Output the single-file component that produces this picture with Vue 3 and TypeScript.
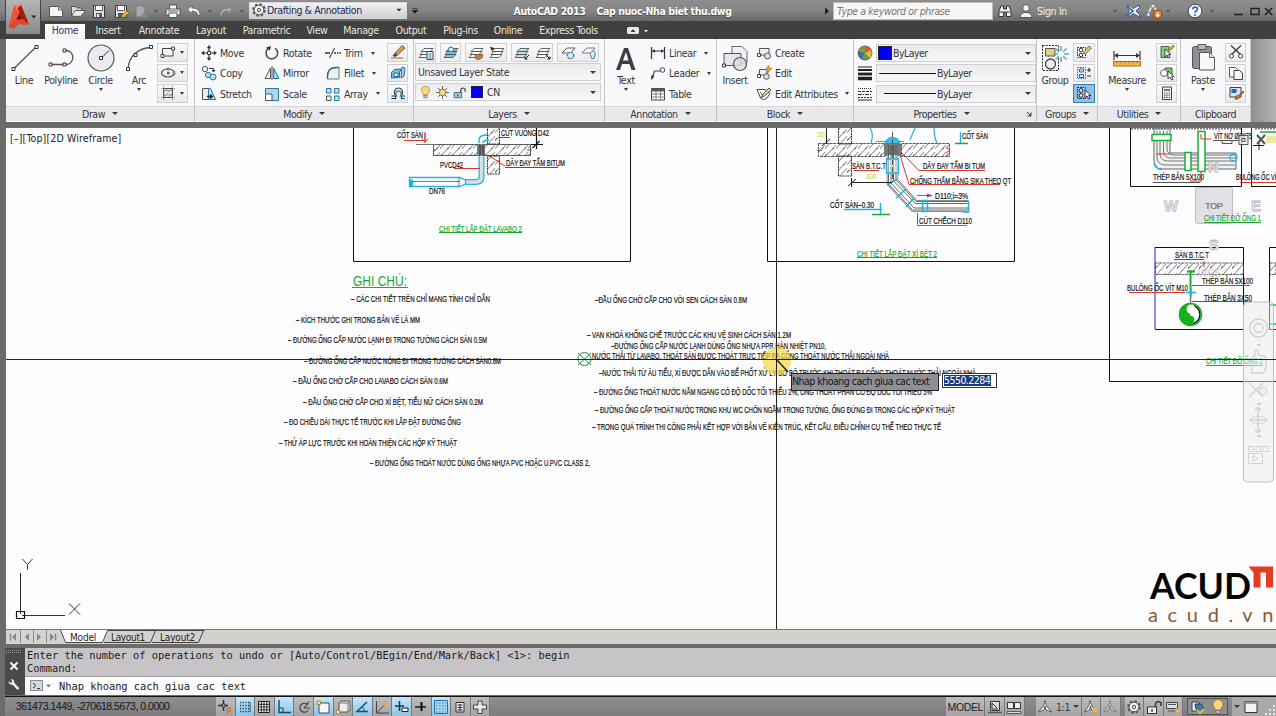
<script setup lang="ts">
type Slot = { icon: string; w: number }
type Note = [number, number, number, string]
type Cell = { icon: string; label: string; arrow?: boolean }

const K = 'fill="none" stroke="#4a4d55" stroke-width="1.2"'
const icons: Record<string, string> = {
  arrow: '<path d="M5 6.5h6L8 9.800z" fill="#333"/>',
  dimArrow: '<path d="M5.500 7h5L8 9.600z" fill="#555"/>',
  blackArrow: '<path d="M5 5h6M5 7.500h6L8 10.500z" fill="#111" stroke="#111" stroke-width=".8"/>',
  rightArrow: '<path d="M6 4v8l4-4z" fill="#111"/>',
  new: '<path d="M1.500 3.500h9l4 3.500v6.500h-13z" fill="#f4f4f4" stroke="#555"/><path d="M10.500 3.500V7h4" fill="#ccc" stroke="#666"/>',
  open: '<path d="M1.500 13V3.500h4l1 1.500h5v2.500" fill="#ddd" stroke="#555"/><path d="M1.500 13.300L5 7.500h10.500L11 13.300z" fill="#eee" stroke="#555"/>',
  save: '<path d="M2.500 2.500h11v12h-11z" fill="#dfe0e4" stroke="#33363c"/><path d="M4.500 2.500h7v5h-7z" fill="#fff" stroke="#555"/><path d="M5 10h6v4.500H5z" fill="#555b66"/><path d="M6 11h2v3H6z" fill="#eee"/>',
  saveas: '<path d="M2.500 2.500h11v12h-11z" fill="#dfe0e4" stroke="#33363c"/><path d="M4.500 2.500h7v5h-7z" fill="#fff" stroke="#555"/><path d="M5 10h5v4.500H5z" fill="#555b66"/><path d="M8 15l1-3 5-4 2 2-5 4z" fill="#f0b63a" stroke="#7a5413" stroke-width=".7"/>',
  plot: '<path d="M3 2.500h6l3 3V14H3z" fill="#aaa" stroke="#777"/><path d="M7 15l5-6 3 3v3z" fill="#8b8b8b" stroke="#777"/>',
  print: '<path d="M4.500 6V2h7v4" fill="#fff" stroke="#555"/><path d="M1 6h14v6H1z" fill="#f2f2f2" stroke="#555"/><path d="M4 10h8v4.500H4z" fill="#fff" stroke="#555"/><path d="M2.500 8h11" stroke="#666"/>',
  undo: '<path d="M1.500 6.500L6 2.500v2.600c5 0 8 2 8 7.400h-2.300c0-3.400-2-4.300-5.700-4.300v2.500z" fill="#f2f2f2" stroke="#555" stroke-width=".8"/>',
  redo: '<path d="M14.500 6.500L10 2.500v2.600c-5 0-8 2-8 7.400h2.300c0-3.400 2-4.300 5.700-4.300v2.500z" fill="#aaa" stroke="#777" stroke-width=".8"/>',
  gear: '<circle cx="8" cy="8" r="5.800" fill="none" stroke="#555" stroke-width="2" stroke-dasharray="2.600 1.900"/><circle cx="8" cy="8" r="4.800" fill="#f4f4f4" stroke="#555"/><circle cx="8" cy="8" r="1.700" fill="#ddd" stroke="#555"/>',
  binoc: '<path d="M2 13.500V8l2-5h2.500v3h3V3H12l2 5v5.500H9.500V9h-3v4.500z" fill="#f1f1f1" stroke="#333"/><path d="M3 9h3M10 9h3" stroke="#333"/>',
  person: '<circle cx="8" cy="5" r="3.400" fill="#f3f3f3" stroke="#555"/><path d="M2 14.500c0-3 2-4 4-5h4c2 1 4 2 4 5z" fill="#f3f3f3" stroke="#555"/>',
  exch: '<path d="M1.500 3h4L8 5.500 14.500 2v2.500L11 8l3.500 3.500v2.500L8 10.500 5.500 13h-4l3-5z" fill="#e7edf7" stroke="#33598e"/><path d="M2.500 3.500L8 8l-5.500 4.500" fill="none" stroke="#2b5aa0" stroke-width="1.600"/>',
  a360: '<path d="M1 13L6 3h2l2 5" fill="none" stroke="#eee" stroke-width="1.600"/><circle cx="7" cy="3" r="2" fill="#eee" stroke="#555" stroke-width=".6"/><circle cx="2.500" cy="11.500" r="2" fill="#cfe0ee" stroke="#446" stroke-width=".6"/><path d="M8 7.500h7.500V15H8z" fill="#e87f22" stroke="#8d4307" stroke-width=".7"/><path d="M11.700 9v3.500M10 11.500l1.700 2 1.700-2" stroke="#fff" fill="none" stroke-width="1.200"/>',
  help: '<circle cx="8" cy="8" r="6.800" fill="#f6f8fb" stroke="#444"/><path d="M5.800 6.300c0-3 4.600-2.800 4.600-.2 0 1.700-2.300 1.700-2.300 3.600M8 11v1.800" fill="none" stroke="#2267b0" stroke-width="1.700"/>',
  min: '<path d="M3 11.500h9" stroke="#222" stroke-width="1.600"/>',
  max: '<path d="M4 5.500h8v6H4z" fill="none" stroke="#222" stroke-width="1.400"/>',
  close: '<path d="M4 5l7 7M11 5l-7 7" stroke="#222" stroke-width="1.600"/>',
  rect: '<path d="M2.500 4.500h10.500v7.500H2.500z" fill="#f3f4f7" stroke="#444"/><path d="M1 10.500h3v3H1zM11.500 3h3v3h-3z" fill="#fff" stroke="#444"/>',
  ellipse: `<ellipse cx="8" cy="8" rx="6.500" ry="4" ${K}/><path d="M7 8h3M8 6.500v3" stroke="#333"/><path d="M13 7h2v2h-2zM7.500 3h1.500v2H7.500z" fill="#fff" stroke="#444" stroke-width=".7"/>`,
  hatch: '<path d="M3.500 3.500h9v9h-9z" fill="#eee" stroke="#444"/><path d="M3.500 8l4.500-4.500M3.500 12l8.500-8.500M8 12.500l4.500-4.500M3.500 5.500h9M3.500 10h9" stroke="#777" stroke-width=".7"/><path d="M1 3.500h14M1 12.500h14M3.500 1v14M12.500 1v14" stroke="#555" stroke-width=".7" stroke-dasharray="1.500 1"/>',
  move: '<path d="M8 2v12M2 8h12" stroke="#333" stroke-width="1.200"/><path d="M8 0L5.800 3.200h4.400zM8 16l-2.200-3.200h4.400zM0 8l3.200-2.200v4.400zM16 8l-3.200-2.200v4.400z" fill="#333"/><path d="M6.500 6.500h3v3h-3z" fill="#fff" stroke="#333"/>',
  copy: '<circle cx="4" cy="4" r="2.700" fill="#fff" stroke="#555"/><path d="M8 3.500h4.500v3M11 5l1.500 2L14 5" fill="none" stroke="#333"/><circle cx="7" cy="10" r="2.700" fill="#bfe0f2" stroke="#2479a8"/><circle cx="12" cy="12" r="3" fill="#bfe0f2" stroke="#2479a8"/>',
  stretch: '<path d="M1.500 2.500h6v11h-6z" fill="#eee" stroke="#555"/><path d="M7.500 2.500h2l5 11h-7z" fill="#bfe2f2" stroke="#2479a8"/><path d="M6 10.500h5M9 8.500l2.500 2-2.500 2" fill="none" stroke="#222" stroke-width="1.300"/>',
  rotate: '<path d="M11 3.200A5.800 5.800 0 1 1 5 3" fill="none" stroke="#50545c" stroke-width="1.600"/><path d="M2 2.500l5-1.500-1 4.500z" fill="#333"/>',
  mirror: '<path d="M1 13.500L6.500 3v10.500z" fill="#f1f1f1" stroke="#555"/><path d="M9.500 3L15 13.500H9.500z" fill="#9fd3ec" stroke="#2479a8"/><path d="M8 1v14" stroke="#333" stroke-width=".8"/>',
  scale: '<path d="M1.500 2.500h13v12h-13z" fill="#aad8ee" stroke="#2479a8"/><path d="M1.500 8h6.500v6.500H1.500z" fill="#fff" stroke="#555"/>',
  trim: '<path d="M0 8h5M9 8h2M12 8h1.500M14.500 8h1.500" stroke="#333" stroke-width="1.300"/><path d="M4.500 13L9.500 3" stroke="#555" stroke-width="1.200"/>',
  fillet: '<path d="M2.500 14V11C2.500 5 6 2.500 11 2.500h3V14z" fill="#edf1f5" stroke="#777"/><path d="M2.500 14v-3C2.500 5 6 2.500 11 2.500h3" fill="none" stroke="#315f86" stroke-width="1.300"/>',
  array: '<path d="M1.500 2.500H6V7H1.500zM9.500 2.500H14V7H9.500zM9.500 10H14v4.500H9.500z" fill="#bfe2f2" stroke="#2479a8"/><path d="M1.500 10H6v4.500H1.500z" fill="#eee" stroke="#555"/>',
  erase: '<path d="M5 9L12 1.500l3 2.500-7.500 7z" fill="#d59c4e" stroke="#6d4b1b" stroke-width=".8"/><path d="M2.500 12L5 9l2.500 2-2 2z" fill="#444"/><path d="M1 14h12" stroke="#c4552d"/>',
  explode: '<path d="M1.500 7.500l3-3 7-.5-2 3v5.500l-8 .5z" fill="#79c2e2" stroke="#1d6f9f"/><path d="M12 2l3 1-1 8-3 2z" fill="#a4d8ee" stroke="#1d6f9f"/><path d="M4 8h4v3.500H4z" fill="#d8f0fa" stroke="#1d6f9f"/>',
  offset: '<path d="M1.500 13.500h4v-3C3 7 5 3 8.500 3s5.500 4 3 7.500v3h3" fill="none" stroke="#333" stroke-width="1.200"/><path d="M1.500 11h5C5 8 6.500 6 8.500 6s3.500 2 2 5H15" fill="none" stroke="#2b83b4" stroke-width="1.400"/>',
  layer: '<path d="M1 12.500l3-3h9l-3 3zM2 9.500l3-3h9l-3 3zM3 6.500l3-3h9l-3 3z" fill="#fff" stroke="#555" stroke-width=".9"/>',
  text: '<path d="M9 2h4l7.500 22h-4l-2-6H7l-2 6H1zM8 14.500h5.500L11 6z" fill="#3d3f45"/>',
  linear: '<path d="M1.500 2v12M14.500 2v12M2 6h12" stroke="#333" stroke-width="1.200"/><path d="M2 6l3-1.800v3.600zM14 6l-3-1.800v3.600z" fill="#333"/>',
  leader: '<path d="M2 14l2.500-8h6" fill="none" stroke="#444" stroke-width="1.200"/><path d="M1 15l.5-5 3 1z" fill="#333"/><circle cx="12.500" cy="5" r="2.300" fill="#fff" stroke="#444"/>',
  table: '<path d="M1.500 2.500h13v11.500h-13z" fill="#fff" stroke="#444"/><path d="M1.500 2.500h13V5.500h-13z" fill="#555c68"/><path d="M1.500 8h13M1.500 11h13M6 5v9M10.500 5v9" stroke="#777" stroke-width=".9"/>',
  create: '<path d="M3.500 3.500H13v6.500H3.500z" fill="#eef0f4" stroke="#555"/><path d="M1.500 8.500h3v3h-3z" fill="#fff" stroke="#444"/><circle cx="11.500" cy="11" r="3" fill="#dde1e8" stroke="#555"/>',
  edit: '<path d="M3.500 4.500H11V10H3.500z" fill="#eef0f4" stroke="#555"/><path d="M1.500 9.500h3v3h-3z" fill="#fff" stroke="#444"/><circle cx="10.500" cy="11.500" r="2.800" fill="#dde1e8" stroke="#555"/><path d="M12.500 0L9.500 5h3l-1.500 4 5-6h-3z" fill="#f2a72c" stroke="#a1600c" stroke-width=".5"/>',
  attr: '<path d="M1 3.500h8l5 4-3 4.500c-3 2-5 2-6.500 0z" fill="#fff" stroke="#444"/><path d="M4 5.500l2.500 4M5 12l2-4 6-6 2 2-6 5.500z" fill="#ead09a" stroke="#333" stroke-width=".8"/>',
  wheel: '<circle cx="8" cy="8" r="7" fill="#e8a03c"/><path d="M8 8V1A7 7 0 0 0 1.500 6z" fill="#8d9a3f"/><path d="M8 8L1.500 6A7 7 0 0 0 5 14.500z" fill="#3970b5"/><path d="M8 8l-3 6.500a7 7 0 0 0 8-1.500z" fill="#4fa35c"/><path d="M8 8l5 5A7 7 0 0 0 14.500 5z" fill="#e2c23a"/><path d="M8 8l6.500-3A7 7 0 0 0 8 1z" fill="#d9602e"/><circle cx="8" cy="8" r="7" fill="none" stroke="#555" stroke-width=".7"/>',
  weight: '<path d="M1 2h14" stroke="#222"/><path d="M1 5h14" stroke="#222" stroke-width="2"/><path d="M1 9h14" stroke="#222" stroke-width="2.800"/><path d="M1 13.500h14" stroke="#222" stroke-width="3.500"/>',
  ltype: '<path d="M1 2.500h14" stroke="#333" stroke-dasharray="1 1"/><path d="M1 5.500h14" stroke="#333" stroke-dasharray="3 1"/><path d="M1 8.500h14" stroke="#333" stroke-dasharray="4 1 1 1"/><path d="M1 11.500h14" stroke="#333" stroke-dasharray="2 1"/><path d="M1 14h14" stroke="#333"/>',
  ungroup: '<path d="M1.500 3.500h8v10h-8z" fill="none" stroke="#222" stroke-dasharray="1.500 1"/><circle cx="5" cy="6" r="1.800" fill="#fff" stroke="#333"/><circle cx="5" cy="11" r="1.800" fill="#fff" stroke="#333"/><path d="M7 9l6-7 2.500 2-6 6z" fill="#e5c182" stroke="#6a4a18" stroke-width=".8"/>',
  gedit: '<path d="M1.500 2.500h8v11h-8z" fill="none" stroke="#2669a0" stroke-dasharray="1.500 1"/><path d="M3.500 4h4v3h-4zM3.500 9.500h4v3h-4z" fill="#cbe5f4" stroke="#2669a0"/><path d="M11 5h4M13 3v4M11 11h4" stroke="#333" stroke-width="1.200"/>',
  gsel: '<path d="M1.500 2.500h8v11h-8z" fill="none" stroke="#222" stroke-dasharray="1.500 1"/><circle cx="5" cy="5.500" r="1.800" fill="#fff" stroke="#222"/><circle cx="5" cy="10.500" r="1.800" fill="#fff" stroke="#222"/><path d="M9 5v8l2-2 1.500 3 1.500-.8-1.500-2.700H15z" fill="#fff" stroke="#224" stroke-width=".9"/>',
  qsel: '<path d="M2 2.500h8v11H2z" fill="#8bc97c" stroke="#3c6b31"/><path d="M6 5v8l2-2 1.500 3 1.500-.8L9.500 10.500H12z" fill="#fff" stroke="#222" stroke-width=".8"/><path d="M10 5l4-4 1.500 1.500-4 4z" fill="#f0a032" stroke="#93570a" stroke-width=".6"/>',
  selall: '<path d="M6 3h7v7H6z" fill="#7fc172" stroke="#39692f"/><circle cx="5" cy="8" r="3.500" fill="#fff" stroke="#666"/><path d="M9 6v8l2-2 1.500 3 1.500-.8-1.500-2.700H15z" fill="#fff" stroke="#222" stroke-width=".8"/>',
  calc: '<path d="M3.500 2h9v12.500h-9z" fill="#f5f5f5" stroke="#444"/><path d="M5 4h6v2H5z" fill="#777"/><path d="M5 8h6.500M5 10.200h6.500M5 12.400h6.500" stroke="#555" stroke-width="1.200" stroke-dasharray="1.500 .8"/>',
  cut: '<path d="M3 1.500l9.500 9M13 1.500l-9.500 9" stroke="#444" stroke-width="1.500"/><circle cx="3.500" cy="12" r="2" fill="#fff" stroke="#444"/><circle cx="12.500" cy="12" r="2" fill="#fff" stroke="#444"/>',
  copyclip: '<path d="M1.500 2.500h6l2 2V12h-8z" fill="#fff" stroke="#555"/><path d="M6 5.500h5.500l3 2.500v6.500H6z" fill="#f4f5f8" stroke="#444"/>',
  match: '<path d="M2 2.500h11V12H2z" fill="#dce6f0" stroke="#345"/><path d="M3.500 4h5v4h-5z" fill="#2b6cab"/><path d="M7 14c0-3 2-4 4-4l4-4 1 1-4 4c0 2-2 4-5 3z" fill="#c1752b" stroke="#6f3e10" stroke-width=".6"/>',
  bulb: '<path d="M5.500 11C5.500 9 3 8 3 5.500a5 5 0 0 1 10 0C13 8 10.500 9 10.500 11z" fill="#f8d67c" stroke="#9a7222" stroke-width=".8"/><path d="M6 11.500h4v3H6z" fill="#c9c9c9" stroke="#666" stroke-width=".8"/>',
  sun: '<path d="M8 0v16M0 8h16M2.500 2.500l11 11M13.500 2.500l-11 11" stroke="#555" stroke-width="1.100"/><circle cx="8" cy="8" r="4" fill="#f8da8c" stroke="#7e6425"/>',
  unlock: '<path d="M9.500 8V5a3 3 0 0 1 5.500-1v3" fill="none" stroke="#555" stroke-width="1.700"/><path d="M1.500 8h9v6.500h-9z" fill="#a9cbe0" stroke="#2a5674"/><path d="M6 10v3" stroke="#234" stroke-width="1.300"/>',
  unlockGray: '<path d="M9.500 8V5a3 3 0 0 1 5.500-1v3" fill="none" stroke="#444" stroke-width="1.700"/><path d="M1.500 8h9v6.500h-9z" fill="#eee" stroke="#333"/><path d="M6 10v3" stroke="#333" stroke-width="1.300"/>',
  snap: '<path d="M1 6.500h10M6.500 1v11" stroke="#333" stroke-width="1.500"/><path d="M5 5h3v3H5z" fill="#bbb" stroke="#333"/><path d="M10.500 15V9h3v3h-3" fill="none" stroke="#d9762a" stroke-width="1.400"/>',
  dots: '<path d="M3 3.500h9M3 6.500h9M3 9.500h9M3 12.500h9" stroke="#1f3f5f" stroke-width="1.300" stroke-dasharray="1.200 1.400"/><path d="M13 3v10" stroke="#345"/>',
  grid: '<path d="M2.500 2.500h11v11h-11z" fill="#fff" stroke="#222"/><path d="M2.500 5.300h11M2.500 8h11M2.500 10.800h11M5.300 2v12M8 2v12M10.800 2v12" stroke="#222"/>',
  ortho: '<path d="M3 1v12.500h12" fill="none" stroke="#174463" stroke-width="1.400"/><path d="M3 9h4v4" fill="none" stroke="#174463"/>',
  polar: '<path d="M12 6A4.500 4.500 0 1 0 12 11.500M8 9l5-6.500M8 9h6" fill="none" stroke="#444" stroke-width="1.200"/>',
  osnap: '<path d="M4 4h10v10H4z" fill="#f5f6f8" stroke="#446"/><path d="M2 2h3.500v3.500H2z" fill="#f8d79d" stroke="#cc7a22"/>',
  cube: '<path d="M4 4l2-2h9v9l-2 2H4z" fill="#eee" stroke="#555"/><path d="M4 4h9v9M13 4l2-2" fill="none" stroke="#777"/><circle cx="3" cy="13" r="1.800" fill="#fff" stroke="#cc7a22"/>',
  angle: '<path d="M13 3L3 12.500h11" fill="none" stroke="#1d4f75" stroke-width="1.500"/><path d="M8 8c2 1 2 2 2 4" fill="none" stroke="#1d4f75"/>',
  ducs: '<path d="M2.500 2v12H15M2.500 14l8-8" fill="none" stroke="#444"/><path d="M11.500 1l1 3 3 1-3 1-1 3-1-3-3-1 3-1z" fill="#f1a53c"/>',
  dyn: '<path d="M1 7h9M5.500 2v10" stroke="#16384f" stroke-width="1.500"/><path d="M8 9h6v3.500H8z" fill="#fff" stroke="#222"/>',
  lwt: '<path d="M2 8h11" stroke="#111" stroke-width="1.400"/><path d="M8.500 3v9" stroke="#111" stroke-width="2"/>',
  tpy: '<path d="M1.500 1.500h13v13h-13z" fill="#a9d5f0" stroke="#1e74ab"/><path d="M3 4h10M3 7h10M3 10h10M3 13h10" stroke="#55a3d3" stroke-dasharray="1.500 1.500" stroke-width="1.500"/>',
  qp: '<path d="M4 3.500h8v9.500H4z" fill="#eee" stroke="#333"/><path d="M5.500 6h5M5.500 8.500h5M5.500 11h5M8 5v7" stroke="#333"/>',
  plus: '<path d="M6 2h4v4h4.500v4H10v4.500H6V10H1.500V6H6z" fill="#e9e9ec" stroke="#444"/>',
  mspace: '<path d="M3.500 2.500h9v9h-9z" fill="#ddd" stroke="#333"/><path d="M5 4l5 5M5 4v6h6" fill="none" stroke="#333"/><path d="M1 13.500h14" stroke="#555" stroke-width="1.500"/>',
  qview: '<path d="M1.500 3.500h6v6h-6zM8.500 3.500h6v6h-6z" fill="#eee" stroke="#333"/><path d="M1 12.500h14v2H1z" fill="#ddd" stroke="#444" stroke-width=".8"/>',
  anno: '<path d="M8 1.500L6.500 7l-5 6 5.500-2 1-4 1 4 5.500 2-5-6z" fill="#f4f4f4" stroke="#444" stroke-width=".8"/>',
  annoStar: '<path d="M7 1.500L5.500 7l-4 6L6.500 11l1-4 1 4 4.500 2-4-6z" fill="#f4f4f4" stroke="#444" stroke-width=".8"/><circle cx="12" cy="11" r="2.500" fill="#eeb253"/>',
  annoDim: '<path d="M8 1.500L6.500 7l-5 6 5.500-2 1-4 1 4 5.500 2-5-6z" fill="#c5c5c5" stroke="#777" stroke-width=".8"/>',
  hw: '<path d="M1.500 3.500h11v6h-11z" fill="#ddd" stroke="#444"/><path d="M3 12h8M3 5.500h8" stroke="#555"/><circle cx="12.500" cy="11.500" r="2.300" fill="#eeb253"/>',
  tray: '<path d="M2 3h7v9H2z" fill="#e7eef5" stroke="#345"/><path d="M5 5h6l3 4-4 4-4-3z" fill="#3c79b6" stroke="#244"/><path d="M7 11l3 3 4-4" stroke="#e4c22e" stroke-width="2" fill="none"/>',
  win: '<path d="M2 2.500h12v11H2z" fill="#f4f4f4" stroke="#333"/><path d="M2 2.500h12v2.500H2z" fill="#999"/>',
  grip: '<path d="M12 6v2M8 10v2M12 10v2M4 14v2M8 14v2M12 14v2" stroke="#e6e6e6" stroke-width="2"/>',
  wrench: '<path d="M2 3.500L4.500 6 6.500 4 4 1.500c3-.5 5 1.500 4.500 4l6 6.500-2 2L6.500 8C4 8.500 1.500 6.500 2 3.500z" fill="#eee"/>',
}

const L = icons.layer
Object.assign(icons, {
  lprop: L + '<path d="M9 6.500h6v8H9z" fill="#fff" stroke="#345"/><path d="M10.500 9h3M10.500 11h3M10.500 13h3" stroke="#2677ab"/>',
  lcur: L.replace('#fff', '#7fc4e4') + '<circle cx="8" cy="4.500" r="2.500" fill="#dff1fa" stroke="#1d6f9f"/>',
  lmatch: L + '<path d="M7 10l3 1 5-2-1 4-4 2c-2-.5-3-2-3-5z" fill="#c98036" stroke="#7a4812" stroke-width=".6"/>',
  lprev: L + '<path d="M1 1.500l5 2-3.500 2z" fill="#222"/>',
  liso: L.replace('#fff', '#bfe0f2') + '<path d="M15 10l-4 4M11 11.500V14h2.500" stroke="#111" fill="none"/>',
  luniso: L + '<path d="M11 10l4 4M15 11.500V14h-2.500" stroke="#111" fill="none"/>',
  lfrz: '<path d="M2 8l5-5h8l-4 5z" fill="#fff" stroke="#555"/><circle cx="10.500" cy="10.500" r="3.200" fill="#d8ecf7" stroke="#2979a8" stroke-width="1.300" stroke-dasharray="2 1"/>',
  loff: '<path d="M1 8l5-5h8l-4 5z" fill="#fff" stroke="#777"/><path d="M9.500 9.500a2.500 2.500 0 1 1 4.500 0l-1 4h-2.500z" fill="#d7e9f5" stroke="#4a7fa5"/>',
})

const qat: Slot[] = [
  { icon: 'new', w: 22 }, { icon: 'open', w: 21 }, { icon: 'save', w: 22 }, { icon: 'saveas', w: 21 },
  { icon: 'plot', w: 20 }, { icon: 'dimArrow', w: 9 }, { icon: 'print', w: 26 }, { icon: 'undo', w: 16 },
  { icon: 'dimArrow', w: 16 }, { icon: 'redo', w: 16 }, { icon: 'dimArrow', w: 15 },
]
const rightTools: Slot[] = [
  { icon: 'dimArrow', w: 12 }, { icon: 'exch', w: 24 }, { icon: 'a360', w: 18 }, { icon: 'dimArrow', w: 10 },
  { icon: '', w: 10 }, { icon: 'help', w: 24 }, { icon: 'dimArrow', w: 10 }, { icon: '', w: 13 },
  { icon: 'min', w: 17 }, { icon: 'max', w: 15 }, { icon: 'close', w: 14 },
]
const menu: [string, number][] = [
  ['Home', 40], ['Insert', 46], ['Annotate', 56], ['Layout', 48], ['Parametric', 63], ['View', 38],
  ['Manage', 50], ['Output', 50], ['Plug-ins', 49], ['Online', 46], ['Express Tools', 75],
]
const modify: Cell[] = [
  { icon: 'move', label: 'Move' }, { icon: 'rotate', label: 'Rotate' }, { icon: 'trim', label: 'Trim', arrow: true },
  { icon: 'copy', label: 'Copy' }, { icon: 'mirror', label: 'Mirror' }, { icon: 'fillet', label: 'Fillet', arrow: true },
  { icon: 'stretch', label: 'Stretch' }, { icon: 'scale', label: 'Scale' }, { icon: 'array', label: 'Array', arrow: true },
]
const anno: Cell[] = [
  { icon: 'linear', label: 'Linear', arrow: true }, { icon: 'leader', label: 'Leader', arrow: true }, { icon: 'table', label: 'Table' },
]
const block: Cell[] = [
  { icon: 'create', label: 'Create' }, { icon: 'edit', label: 'Edit' }, { icon: 'attr', label: 'Edit Attributes', arrow: true },
]
const layerGroups = [['lprop'], ['lcur'], ['lmatch', 'lprev'], ['liso', 'luniso'], ['lfrz', 'loff']]
const toggles: [string, boolean][] = [
  ['snap', false], ['dots', true], ['grid', false], ['ortho', true], ['polar', false], ['osnap', true], ['cube', false],
  ['angle', true], ['ducs', false], ['dyn', true], ['lwt', false], ['tpy', true], ['qp', false], ['plus', false],
]

const notes: Note[] = [
  [351, 302, 139, '– CÁC CHI TIẾT TRÊN CHỈ MANG TÍNH CHỈ DẪN'],
  [296, 322.5, 124, '– KÍCH THƯỚC GHI TRONG BẢN VẼ LÀ MM'],
  [288, 343, 199, '– ĐƯỜNG ỐNG CẤP NƯỚC LẠNH ĐI TRONG TƯỜNG CÁCH SÀN 0.5M'],
  [304, 363.5, 197, '– ĐƯỜNG ỐNG CẤP NƯỚC NÓNG ĐI TRONG TƯỜNG CÁCH SÀN0.8M'],
  [293, 384, 155, '– ĐẦU ỐNG CHỜ CẤP CHO LAVABO CÁCH SÀN 0.6M'],
  [303, 404.5, 180, '– ĐẦU ỐNG CHỜ CẤP CHO XÍ BỆT, TIỂU NỮ CÁCH SÀN 0.2M'],
  [284, 425, 177, '– ĐO CHIỀU DÀI THỰC TẾ TRƯỚC KHI LẮP ĐẶT ĐƯỜNG ỐNG'],
  [279, 445.5, 178, '– THỬ ÁP LỰC TRƯỚC KHI HOÀN THIỆN CÁC HỘP KỸ THUẬT'],
  [370, 466, 220, '– ĐƯỜNG ỐNG THOÁT NƯỚC DÙNG ỐNG NHỰA PVC HOẶC U.PVC CLASS 2,'],
  [595, 303, 152, '–ĐẦU ỐNG CHỜ CẤP CHO VÒI SEN CÁCH SÀN 0.8M'],
  [587, 337.5, 204, '– VAN KHOÁ KHỐNG CHẾ TRƯỚC CÁC KHU VỆ SINH CÁCH SÀN 1.2M'],
  [611, 349, 215, '–ĐƯỜNG ỐNG CẤP NƯỚC LẠNH DÙNG ỐNG NHỰA PPR HÀN NHIỆT PN10,'],
  [592, 359, 297, 'NƯỚC THẢI TỪ LAVABO, THOÁT SÀN ĐƯỢC THOÁT TRỰC TIẾP RA CỐNG THOÁT NƯỚC THẢI NGOÀI NHÀ'],
  [599, 376, 377, '–NƯỚC THẢI TỪ ÂU TIỂU, XÍ ĐƯỢC DẪN VÀO BỂ PHỐT XỬ LÝ SƠ BỘ TRƯỚC KHI THOÁT RA CỐNG THOÁT NƯỚC THẢI NGOÀI NHÀ'],
  [594, 395, 338, '– ĐƯỜNG ỐNG THOÁT NƯỚC NẰM NGANG CÓ ĐỘ DỐC TỐI THIỂU 2%, ỐNG THOÁT PHÂN CÓ ĐỘ DỐC TỐI THIỂU 3%'],
  [595, 412.5, 360, '– ĐƯỜNG ỐNG CẤP THOÁT NƯỚC TRONG KHU WC CHÔN NGẦM TRONG TƯỜNG, ỐNG ĐỨNG ĐI TRONG CÁC HỘP KỸ THUẬT'],
  [592, 429.5, 349, '– TRONG QUÁ TRÌNH THI CÔNG PHẢI KẾT HỢP VỚI BẢN VẼ KIẾN TRÚC, KẾT CẤU. ĐIỀU CHỈNH CỤ THỂ THEO THỰC TẾ'],
  [397, 137.5, 26, 'CỐT SÀN'],
  [501, 136, 48, 'CÚT VUÔNG D42'],
  [440, 167.5, 23, 'PVCD42'],
  [506, 166, 59, 'DÂY ĐAY TẨM BITUM'],
  [429, 193.5, 16, 'DN76'],
  [962, 139, 26, 'CỐT SÀN'],
  [852, 169, 34, 'SÀN B.T.C.T'],
  [923, 169, 62, 'DÂY ĐAY TẨM BI TUM'],
  [910, 183.5, 101, 'CHỐNG THẤM BẰNG SIKA THEO QT'],
  [935, 198.5, 33, 'D110;i=3%'],
  [830, 207.5, 44, 'CỐT SÀN–0.30'],
  [919, 223.5, 53, 'CÚT CHẾCH D110'],
  [1214, 139, 38, 'VÍT NỞ Ø6X75'],
  [1153, 180, 51, 'THÉP BẢN 5X100'],
  [1236, 180, 56, 'BULÔNG ỐC VÍT M10'],
  [1175, 257.5, 34, 'SÀN B.T.C.T'],
  [1202, 283.5, 51, 'THÉP BẢN 5X100'],
  [1127, 291, 61, 'BULÔNG ỐC VÍT M10'],
  [1204, 300.5, 48, 'THÉP BẢN 3X50'],
]
const captions: Note[] = [
  [439, 231.5, 83, 'CHI TIẾT LẮP ĐẶT LAVABO 2'],
  [857, 256.5, 80, 'CHI TIẾT LẮP ĐẶT XÍ BỆT 2'],
  [1204, 221, 57, 'CHI TIẾT ĐỠ ỐNG 1'],
  [1206, 364, 57, 'CHI TIẾT ĐỠ ỐNG 2'],
]
</script>

<template>
  <div class="window">
    <header class="titlebar">
      <span v-for="(s, i) in qat" :key="i" class="slot" :style="{ width: s.w + 'px' }">
        <svg class="ic" viewBox="0 0 16 16" v-html="icons[s.icon]" />
      </span>
      <div class="workspace">
        <svg class="ic" viewBox="0 0 16 16" v-html="icons.gear" />
        <span class="grow">Drafting &amp; Annotation</span>
        <svg class="ic sm" viewBox="0 0 16 16" v-html="icons.arrow" />
      </div>
      <span class="slot w16"><svg class="ic sm" viewBox="0 0 16 16" v-html="icons.blackArrow" /></span>
      <h1 class="title"><span>AutoCAD 2013</span><span>Cap nuoc-Nha biet thu.dwg</span></h1>
      <span class="slot w12"><svg class="ic sm" viewBox="0 0 16 16" v-html="icons.rightArrow" /></span>
      <div class="search">Type a keyword or phrase</div>
      <span class="slot w24"><svg class="ic" viewBox="0 0 16 16" v-html="icons.binoc" /></span>
      <span class="slot w18"><svg class="ic" viewBox="0 0 16 16" v-html="icons.person" /></span>
      <span class="signin">Sign In</span>
      <span v-for="(s, i) in rightTools" :key="'r' + i" class="slot" :style="{ width: s.w + 'px' }">
        <svg class="ic" viewBox="0 0 16 16" v-html="icons[s.icon]" />
      </span>
    </header>

    <nav class="menubar">
      <span v-for="(m, i) in menu" :key="m[0]" class="tab" :class="{ active: i === 0 }" :style="{ width: m[1] + 'px' }">{{ m[0] }}</span>
      <svg class="minimize" viewBox="0 0 24 10">
        <rect x="0" y="1" width="12" height="7" rx="1.500" fill="#e8e8e8" /><path d="M3.500 6h5L6 3z" fill="#444" /><path d="M17 4h4l-2 2.500z" fill="#eee" />
      </svg>
    </nav>

    <button class="appbtn">
      <svg viewBox="0 0 36 35">
        <path d="M3 28L9 5h7l8 20-6 1-2-5-6 2-1 7z" fill="#d3301d" />
        <path d="M9 5l3-1h5l-1 1-3 9z" fill="#f78468" />
        <path d="M9 5l5 12-11 11z" fill="#ef5136" />
        <path d="M16 5l8 20-5-1-7-16z" fill="#a41a0e" />
        <path d="M3 28l8-7 7-1 6 5-6 1-4-1-5 4z" fill="#e8452d" /><path d="M11 20l3-6 3 6z" fill="#6d0f08" />
        <path d="M27 16h5l-2.500 3z" fill="#222" />
      </svg>
    </button>

    <section class="ribbon">
      <div class="panel p-draw">
        <div class="body">
          <div class="big b36"><svg viewBox="0 0 30 30"><path d="M4.500 26L27 4" stroke="#555" stroke-width="1.300" /><path d="M3 24.500h3v3H3zM26 2.500h3v3h-3z" fill="#fff" stroke="#333" /></svg>Line</div>
          <div class="big b38"><svg viewBox="0 0 30 30"><path d="M4 21.500h16c9 0 9-14 0-14" fill="none" stroke="#555" stroke-width="1.300" /><path d="M3 20h3v3H3zM17 20h3v3h-3zM17 6h3v3h-3z" fill="#fff" stroke="#333" /></svg>Polyline</div>
          <div class="big b40"><svg viewBox="0 0 30 30"><circle cx="15" cy="15" r="13" fill="#e9ebf0" stroke="#555" stroke-width="1.200" /><path d="M16 14.500l7-7" stroke="#333" /><path d="M13.500 13.500h3v3h-3z" fill="#fff" stroke="#333" /></svg>Circle<i class="dn" /></div>
          <div class="big b36"><svg viewBox="0 0 30 30"><path d="M4 26C5 13 14 5 27 4.500" fill="none" stroke="#555" stroke-width="1.300" /><path d="M2.500 24.500h3v3h-3zM25.500 2.500h3v3h-3zM10 10.500h3v3h-3z" fill="#fff" stroke="#333" /></svg>Arc<i class="dn" /></div>
          <div class="stack split">
            <span v-for="n in ['rect', 'ellipse', 'hatch']" :key="n" class="mini wide"><svg class="ic" viewBox="0 0 16 16" v-html="icons[n]" /><i class="dn bar" /></span>
          </div>
        </div>
        <footer>Draw<i class="dn big-dn" /></footer>
      </div>

      <div class="panel p-modify">
        <div class="body">
          <div class="cells c3">
            <span v-for="c in modify" :key="c.label" class="cell"><svg class="ic" viewBox="0 0 16 16" v-html="icons[c.icon]" />{{ c.label }}<i v-if="c.arrow" class="dn gap" /></span>
          </div>
          <div class="stack"><span v-for="n in ['erase', 'explode', 'offset']" :key="n" class="mini"><svg class="ic" viewBox="0 0 16 16" v-html="icons[n]" /></span></div>
        </div>
        <footer>Modify<i class="dn big-dn" /></footer>
      </div>

      <div class="panel p-layers">
        <div class="body col">
          <div class="lrow">
            <span v-for="(g, i) in layerGroups" :key="i" class="lgroup"><svg v-for="n in g" :key="n" class="ic" viewBox="0 0 16 16" v-html="icons[n]" /></span>
          </div>
          <div class="combo"><span class="grow">Unsaved Layer State</span><i class="dn big-dn" /></div>
          <div class="combo tight"><svg v-for="n in ['bulb', 'sun', 'unlock']" :key="n" class="ic" viewBox="0 0 16 16" v-html="icons[n]" /><b class="swatch" /><span class="grow cn">CN</span><i class="dn big-dn" /></div>
        </div>
        <footer>Layers<i class="dn big-dn" /></footer>
      </div>

      <div class="panel p-anno">
        <div class="body">
          <div class="big b42"><svg viewBox="-4 -3 30 30" v-html="icons.text" />Text<i class="dn" /></div>
          <div class="cells c1"><span v-for="c in anno" :key="c.label" class="cell"><svg class="ic" viewBox="0 0 16 16" v-html="icons[c.icon]" />{{ c.label }}<i v-if="c.arrow" class="dn gap" /></span></div>
        </div>
        <footer>Annotation<i class="dn big-dn" /></footer>
      </div>

      <div class="panel p-block">
        <div class="body">
          <div class="big b36"><svg viewBox="0 0 30 30"><path d="M12 3.500h10l5 5V20H12z" fill="#f1f2f5" stroke="#666" /><path d="M4 10.500h17v12H4z" fill="#e3e6ec" stroke="#555" /><circle cx="20" cy="21" r="6.500" fill="#d9dde6" fill-opacity=".8" stroke="#555" stroke-width="1.200" /><path d="M2.500 21h3v3h-3z" fill="#fff" stroke="#333" /></svg>Insert</div>
          <div class="cells c1"><span v-for="c in block" :key="c.label" class="cell"><svg class="ic" viewBox="0 0 16 16" v-html="icons[c.icon]" />{{ c.label }}<i v-if="c.arrow" class="dn gap" /></span></div>
        </div>
        <footer>Block<i class="dn big-dn" /></footer>
      </div>

      <div class="panel p-props">
        <div class="body col">
          <div class="prow"><svg class="ic" viewBox="0 0 16 16" v-html="icons.wheel" /><div class="combo"><b class="swatch lg" /><span class="grow">ByLayer</span><i class="dn big-dn" /></div></div>
          <div class="prow"><svg class="ic" viewBox="0 0 16 16" v-html="icons.weight" /><div class="combo"><hr class="l57" /><span class="grow">ByLayer</span><i class="dn big-dn" /></div></div>
          <div class="prow"><svg class="ic" viewBox="0 0 16 16" v-html="icons.ltype" /><div class="combo"><hr class="l52" /><span class="grow">ByLayer</span><i class="dn big-dn" /></div></div>
        </div>
        <footer><span class="grow mid">Properties<i class="dn big-dn" /></span><svg class="launch" viewBox="0 0 6 6"><path d="M1 1l4 4M5 1.500V5H1.500" fill="none" stroke="#333" /></svg></footer>
      </div>

      <div class="panel p-groups">
        <div class="body">
          <div class="big b36"><svg viewBox="0 0 30 30"><path d="M2.500 2.500h16v25h-16z" fill="none" stroke="#222" stroke-dasharray="2 1.200" /><path d="M5.500 5.500H15V13H5.500z" fill="#e3cf8a" stroke="#555" /><circle cx="10.500" cy="21" r="5" fill="#eee" stroke="#444" stroke-width="1.300" /><path d="M21 3v16M13 11h16M15.500 5.500l11 11M26.500 5.500l-11 11" stroke="#5ea7cf" stroke-width="1.500" /><circle cx="21" cy="11" r="3" fill="#fff" /></svg>Group</div>
          <div class="stack"><span v-for="n in ['ungroup', 'gedit', 'gsel']" :key="n" class="mini" :class="{ on: n === 'gsel' }"><svg class="ic" viewBox="0 0 16 16" v-html="icons[n]" /></span></div>
        </div>
        <footer>Groups<i class="dn big-dn" /></footer>
      </div>

      <div class="panel p-utils">
        <div class="body">
          <div class="big b58"><svg viewBox="0 0 30 30"><path d="M2 8v9M28 8v9M3 12.500h24" stroke="#333" stroke-width="1.200" /><path d="M2 12.500l4-2.500v5zM28 12.500l-4-2.500v5z" fill="#333" /><path d="M1.500 18.500h27v4.500h-27z" fill="#f3bd44" stroke="#a36f10" /><path d="M5 18v2.500M9 18v2.500M13 18v2.500M17 18v2.500M21 18v2.500M25 18v2.500" stroke="#a36f10" /></svg>Measure<i class="dn" /></div>
          <div class="stack"><span v-for="n in ['qsel', 'selall', 'calc']" :key="n" class="mini"><svg class="ic" viewBox="0 0 16 16" v-html="icons[n]" /></span></div>
        </div>
        <footer>Utilities<i class="dn big-dn" /></footer>
      </div>

      <div class="panel p-clip">
        <div class="body">
          <div class="big b44"><svg viewBox="0 0 30 30"><rect x="4.500" y="3.500" width="19" height="22" rx="2" fill="#8c8f96" stroke="#4d4f55" /><path d="M10 1.500h8v5h-8z" fill="#bbb" stroke="#555" /><path d="M11.500 9.500h10l5 5v12.500h-15z" fill="#f8f8fb" stroke="#555" /><path d="M21.500 9.500v5h5" fill="#ddd" stroke="#666" /></svg>Paste<i class="dn" /></div>
          <div class="stack"><span v-for="n in ['cut', 'copyclip', 'match']" :key="n" class="mini"><svg class="ic" viewBox="0 0 16 16" v-html="icons[n]" /></span></div>
        </div>
        <footer>Clipboard</footer>
      </div>
      <div class="filler" />
    </section>

    <main class="canvas">
      <svg class="drawing" viewBox="6 128 1270 501">
        <defs>
          <pattern id="hatch" width="11" height="16" patternUnits="userSpaceOnUse">
            <path d="M-2 15L12 0M3 17L14 5M-3 8L5 -1M0 12l2-2M7 5l2-1" stroke="#555" stroke-width=".8" />
          </pattern>
          <clipPath id="half"><rect x="1178" y="303" width="12" height="24" /></clipPath>
        </defs>

        <g fill="none" stroke="#111" stroke-width="1">
          <path d="M353.500 127V261.500H630.500V127M767.500 127V261.500H1014.500V127M1109.500 127V381.500H1276" />
          <path d="M1130.500 127V186.500H1241.500V127M1251 186.500h25M1155 247.500h88.500v82h-88.500M1276 247.500h-6.500v82h6.500" />
        </g>
        <path d="M1155 247v82M1251.500 127v59" stroke="#2323c8" />

        <!-- lavabo detail -->
        <g>
          <path d="M433.500 144.500h97v11h-97z" fill="url(#hatch)" stroke="#333" stroke-width=".8" />
          <path d="M487.500 127h12v17h-12zM487.500 156h12v18h-12z" fill="url(#hatch)" stroke="#333" stroke-dasharray="2 .7" />
          <path d="M416 144.500h17" stroke="#777" />
          <path d="M481.500 144v33q0 5-6 5h-10" fill="none" stroke="#1fb6dc" stroke-width="6" />
          <path d="M481.500 144v33q0 5-6 5h-10" fill="none" stroke="#d7dfe3" stroke-width="3.500" />
          <path d="M479 143v-3q0-5 8-5M483 143q0-3 6-3" fill="none" stroke="#1fb6dc" stroke-width="1.400" />
          <path d="M477 144.500h8v11h-8z" fill="#777" />
          <path d="M480 144v12M483 144v12" stroke="#333" />
          <path d="M409.500 177.500h50l6 2.500v4l-6 2.500h-50z" fill="#fff" stroke="#1fb6dc" stroke-width="1.300" />
          <path d="M411 179v8M459 177v10M410 181.500h50" stroke="#37626d" stroke-width=".8" /><path d="M409 180h4v6h-4z" fill="#1fb6dc" />
          <path d="M404 140.500h21v-8M425 132.500v10m-3-4l3 4 3-4M454 168.500h26M488 155l17 11M527 150h5M433 150h3" fill="none" stroke="#d33a24" />
          <path d="M505 167.500h53M500 137.500h10" stroke="#555" />
          <path d="M536.500 127v22M531 144.500h12M532.500 148l7-7" fill="none" stroke="#111" stroke-width="1.200" />
        </g>

        <!-- toilet detail -->
        <g>
          <path d="M818.500 143.500h66v13h-66zM901.500 143.500h48v13h-48z" fill="url(#hatch)" stroke="#333" stroke-width=".8" stroke-dasharray="3 .7" />
          <path d="M838.500 127h13v17h-13zM838.500 156h13v20h-13z" fill="url(#hatch)" stroke="#333" stroke-dasharray="2 .7" />
          <path d="M884 144h17v12h-17z" fill="#777" />
          <path d="M892.500 155v27l22 24h54" fill="none" stroke="#65696e" stroke-width="11.500" />
          <path d="M892.500 155v27l22 24h54" fill="none" stroke="#fff" stroke-width="10" />
          <path d="M888.500 145v39l24 26h56M891 145v38l23 25h54M893.500 145v36l22 22.500h52M896 145v35l20 21.500h52" fill="none" stroke="#555" stroke-width=".9" />
          <path d="M886.500 159h12v14h-12z" fill="#dff3fa" fill-opacity=".5" stroke="#1fb6dc" stroke-width="1.300" />
          <path d="M887 185l10-6M896 198l10-9M906 207l8-9M922.500 200.500h5v11h-5zM968.500 201v11h-6" fill="none" stroke="#1fb6dc" stroke-width="1.600" />
          <path d="M870 128q4 6 1 15M915 128l-5 12M934 128q0 9 3 15M876 141.500h28" fill="none" stroke="#1fb6dc" stroke-width="1.200" />
          <path d="M885 143.500c1-8 14-8 15 0z" fill="#3cbbe6" stroke="#1397c4" /><path d="M892.500 132v50" stroke="#555" stroke-dasharray="5 2" />
          <path d="M854 170.500h25M902 153l17 17.500h66M900 155l9 29.500h91M917.500 213v11.500" fill="none" stroke="#d33a24" />
          <path d="M917 225.500h50M817 150.500h5" stroke="#a55" />
          <path d="M852 182.500h40M851.500 178v9M848 186l8-7M826.500 127v17M822 146l8-7" stroke="#222" fill="none" />
          <path d="M844 209.500h38M880.500 203v12M960.500 132v12" stroke="#1fb6dc" stroke-width="1.400" />
          <path d="M872 214.500h18M955 143.500h13" stroke="#16ad35" stroke-width="1.600" />
          <path d="M917 195.500h12" stroke="#b445b0" /><path d="M933 195.500l-6-2v4z" fill="#a13a9f" />
          <text x="866" y="179" class="dim" textLength="10" lengthAdjust="spacingAndGlyphs">300</text>
          <text x="817" y="137" class="dim" textLength="8" lengthAdjust="spacingAndGlyphs">200</text>
          <path d="M946 147l4 3-4 3" stroke="#d33a24" fill="none" />
        </g>

        <!-- pipe brackets -->
        <g>
          <path d="M1131 128.500h110M1255 128.500h21" stroke="#777" stroke-width="2" stroke-dasharray="2 1" />
          <path d="M1154 129v32q1 8 7 8h75V153h-66V129z" fill="#f2f2f3" stroke="#666" />
          <path d="M1157 131v27q1 7 8 7h70M1160 131v24q1 6 8 6h67M1163.500 131v21q1 6 7 6h65M1167 131v18q1 6 6 6h62" fill="none" stroke="#777" />
          <path d="M1152 134.500h19v6h-19zM1185 152.500h6v18h-6zM1198 131.500h7v40h-7z" fill="#fff" stroke="#14b233" stroke-width="1.500" />
          <path d="M1156 154h14M1201 134v5h10M1201 171v11M1190 181h11M1240 182.500h36M1204 261v6M1192 285.500h58M1129 292.500h56" fill="none" stroke="#d33a24" />
          <path d="M1153 182.500h47M1213 140.500h28M1174 259.500h30M1192 301.500h60" stroke="#555" />
          <path d="M1154 163q2 7 8 6" fill="none" stroke="#1fb6dc" stroke-width="1.500" />
          <circle cx="1233.500" cy="157.500" r="3.500" fill="none" stroke="#1fb6dc" stroke-width="1.300" />
          <path d="M1155.500 263h88v11.500h-88zM1270 263h6v11.500h-6z" fill="url(#hatch)" stroke="#444" stroke-width=".8" stroke-dasharray="3 .7" />
          <path d="M1190.500 270v26M1187 271.500h8" stroke="#14b233" stroke-width="2" /><path d="M1190.500 296v8" stroke="#777" stroke-width="1.500" />
          <path d="M1186 292.500h10M1191 289v8" stroke="#1fb6dc" stroke-width="1.500" />
          <circle cx="1190.500" cy="314.500" r="9.500" fill="#fff" stroke="#111" stroke-width="1.500" /><circle cx="1190.500" cy="314.500" r="11.500" clip-path="url(#half)" fill="#14b21f" />
          <circle cx="1190.500" cy="314.500" r="11" fill="none" stroke="#14b21f" stroke-width="1.500" /><circle cx="1191" cy="309" r="4.500" fill="#fff" /><circle cx="1190" cy="320" r="4.500" fill="#14b21f" />
          <path d="M1260 132h16M1270 305h6M1270 324h6" stroke="#14b233" stroke-width="1.500" />
          <path d="M1253 145.500h11M1259 141v9" stroke="#222" fill="none" /><path d="M1266 136h10v7h-10z" fill="#d9d94a" opacity=".5" />
        </g>

        <!-- view cube -->
        <g class="cube">
          <rect x="1195.500" y="187.500" width="37" height="36" rx="2" fill="#dcdce0" fill-opacity=".85" stroke="#bfbfc4" />
          <text x="1205" y="209" class="top" textLength="18">TOP</text>
          <text x="1164" y="211" class="face">W</text><text x="1251" y="211" class="face">E</text>
          <text x="1208" y="172" class="face">N</text><text x="1209" y="250" class="face">S</text>
          <text x="1198" y="277" class="wcs">WCS</text>
        </g>

        <g class="cad">
          <text v-for="n in notes" :key="n[3] + n[1]" :x="n[0]" :y="n[1]" :textLength="n[2]" lengthAdjust="spacingAndGlyphs">{{ n[3] }}</text>
        </g>
        <g class="cad green">
          <text v-for="n in captions" :key="n[3]" :x="n[0]" :y="n[1]" :textLength="n[2]" lengthAdjust="spacingAndGlyphs">{{ n[3] }}</text>
          <path v-for="n in captions" :key="'u' + n[3]" :d="`M${n[0]} ${Math.floor(n[1]) + 1.5}h${n[2]}`" stroke="#18a82a" />
          <text x="353" y="285.500" class="heading" textLength="54" lengthAdjust="spacingAndGlyphs">GHI CHÚ:</text>
          <path d="M352 287.500h56" stroke="#18a82a" stroke-width="1.200" />
        </g>
        <g fill="#eee" fill-opacity=".8" stroke="#555"><path d="M1222 140.500h10v3h-10zM1239 135.500h9v9h-9zM1242 138.500h3v3h-3z" /><path d="M1257 135l8 9M1265 135l-8 9" stroke-width="2" /></g>

        <!-- navigation bar -->
        <g fill="none" stroke="#d2d2d6">
          <rect x="1243.500" y="302" width="30" height="180" rx="4" fill="#ececef" fill-opacity=".5" stroke="#bdbdc2" />
          <circle cx="1258.500" cy="328" r="9" stroke-width="1.500" /><circle cx="1258.500" cy="328" r="4.500" stroke-width="1.500" />
          <path d="M1257 345h4M1257 404h4M1257 436h4" stroke-width="2" />
          <path d="M1252 373v-14q0-3 3-3v-5q2-2 3 0v4q8 0 8 4v9l-3 5zM1249 383l14 14M1263 383l-14 14M1258 408v24M1249 420h19M1255 411l3-4 3 4M1255 429l3 4 3-4" stroke-width="1.300" />
          <ellipse cx="1258.500" cy="420" rx="8" ry="3.500" /><circle cx="1263" cy="391" r="4" fill="#eee" />
          <path d="M1248.500 446.500h5v5h-5zM1256 446.500h5v5h-5zM1263 446.500h5v5h-5zM1248.500 453.500h14v10h-14zM1253 455.500v6l5-3z" />
        </g>

        <!-- origin marker and cursor -->
        <g fill="none" stroke="#333"><path d="M20.500 573v41M22 615.500h43M22.500 559l5 5.500 5-5.500M27.500 564.500v5M69 603.500l11 11M80 603.500l-11 11" /><path d="M16.500 611.500h8v7h-8z" stroke="#111" stroke-width="1.200" /></g>
        <circle cx="777" cy="361" r="14" fill="#f4d735" fill-opacity=".65" />
        <circle cx="584.500" cy="359" r="6.500" fill="none" stroke="#2a8c3c" /><path d="M578 353l13 12M591 353l-13 12" stroke="#2a8c3c" />
        <path d="M6 359.500H1276M776.500 127V629" stroke="#222" stroke-width="1" />
        <path d="M777 360l11 12" stroke="#222" stroke-width="1.400" />

        <!-- watermark -->
        <text x="1150" y="599" class="brand" textLength="101" lengthAdjust="spacingAndGlyphs">ACUD</text>
        <path d="M1248.500 566.500h24.500v21h-7v-15h-5.500v15h-7v-15z" fill="#e63c22" />
        <text x="1148" y="622" class="site" textLength="125">acud.vn</text>
      </svg>
      <div class="viewlabel">[–][Top][2D Wireframe]</div>
      <div class="prompt"><span class="tip">Nhap khoang cach giua cac text</span><span class="value"><em>5550.2284</em></span></div>
    </main>

    <div class="layouts">
      <svg viewBox="0 0 204 14">
        <rect width="54" height="14" fill="#d6d3d0" />
        <path d="M14.500 0v13M27.500 0v13M40.500 0v13" stroke="#8b8885" />
        <path d="M4.500 3.500v7M49.500 3.500v7" stroke="#888" stroke-width="1.500" /><path d="M10 3v8l-4-4zM23 3v8l-4-4zM31 3v8l4-4zM44 3v8l4-4z" fill="#888" />
        <path d="M54 0l5 13h38l5-13z" fill="#fff" />
        <path d="M54.500 0l5 12.500h37L101.500.5h48M98 12.500h46.500l5-12h49M146 12.500h46.500l5-12" fill="none" stroke="#444" />
        <g class="lt"><text x="64" y="10.500" textLength="26">Model</text><text x="105" y="10.500" textLength="34">Layout1</text><text x="154" y="10.500" textLength="35">Layout2</text></g>
      </svg>
    </div>

    <section class="command">
      <div class="side">
        <svg viewBox="0 0 18 47"><path d="M1 2.500h16M1 4.500h16" stroke="#999" stroke-dasharray="1 1" /><path d="M5.500 14.500l7 7M12.500 14.500l-7 7" stroke="#fff" stroke-width="1.800" /><g transform="translate(2 30) scale(.85)" v-html="icons.wrench" /></svg>
      </div>
      <div class="log">
        <pre class="hist">Enter the number of operations to undo or [Auto/Control/BEgin/End/Mark/Back] &lt;1&gt;: begin
Command:</pre>
        <div class="line"><svg viewBox="0 0 22 12"><rect x=".5" y=".5" width="12" height="10" fill="#d7d7e2" stroke="#8a8a96" /><path d="M3 3l3 2.500L3 8M7 8.500h3" fill="none" stroke="#333" /><path d="M16 4.500h5l-2.500 3z" fill="#777" /></svg><span>Nhap khoang cach giua cac text</span></div>
      </div>
    </section>

    <footer class="status">
      <span class="coords">361473.1449, -270618.5673, 0.0000</span>
      <span v-for="t in toggles" :key="t[0]" class="tog" :class="{ on: t[1] }"><svg class="ic" viewBox="0 0 16 16" v-html="icons[t[0]]" /></span>
      <span class="space" />
      <span class="tog model">MODEL</span>
      <span class="tog"><svg class="ic" viewBox="0 0 16 16" v-html="icons.mspace" /></span>
      <span class="tog sep"><svg class="ic" viewBox="0 0 16 16" v-html="icons.qview" /></span>
      <span class="tog scale"><svg class="ic" viewBox="0 0 16 16" v-html="icons.anno" />1:1<i class="dn big-dn" /></span>
      <span class="tog"><svg class="ic" viewBox="0 0 16 16" v-html="icons.annoStar" /></span>
      <span class="tog sep2"><svg class="ic" viewBox="0 0 16 16" v-html="icons.annoDim" /></span>
      <span class="tog"><svg class="ic" viewBox="0 0 16 16" v-html="icons.gear" /></span>
      <span class="tog"><svg class="ic" viewBox="0 0 16 16" v-html="icons.unlockGray" /></span>
      <span class="tog sep2"><svg class="ic" viewBox="0 0 16 16" v-html="icons.hw" /></span>
      <span class="tray"><svg class="ic" viewBox="0 0 16 16" v-html="icons.tray" /><svg class="ic" viewBox="0 0 16 16" v-html="icons.bulb" /></span>
      <span class="tog last"><i class="dn big-dn" /><svg class="ic" viewBox="0 0 16 16" v-html="icons.win" /><svg class="ic" viewBox="0 0 16 16" v-html="icons.grip" /></span>
    </footer>
  </div>
</template>

<style>
body { overflow: hidden; }
</style>

<style scoped>
.window {
  position: relative; width: 1276px; height: 716px; overflow: hidden; display: flex; flex-direction: column;
  background: #6c6a6b; color: #35363a;
  font: 10.5px "DejaVu Sans Condensed", "DejaVu Sans", sans-serif; font-stretch: condensed; letter-spacing: -0.34px;
}
.window * { box-sizing: border-box; }
.ic { width: 16px; height: 16px; flex: none; display: block; }
.ic.sm { width: 14px; height: 14px; }
.grow { flex: 1; }
.dn { display: inline-block; flex: none; border: 2.5px solid transparent; border-top: 3px solid #3a3a3a; border-bottom: 0; }
.big-dn { border-width: 3.5px 3.5px 0; }

.titlebar {
  height: 21px; flex: none; display: flex; align-items: center; padding-left: 45px;
  background: linear-gradient(#8e8e8e, #858585 50%, #686868);
}
.slot { display: flex; justify-content: center; align-items: center; flex: none; }
.w12 { width: 12px; } .w16 { width: 16px; } .w18 { width: 18px; } .w24 { width: 24px; }
.workspace {
  width: 158px; height: 17px; display: flex; align-items: center; padding: 0 0 1px 1px; color: #202860;
  background: linear-gradient(#f2f2f2, #cfcfd1); border: 1px solid #d8d8d8; letter-spacing: -0.42px; white-space: nowrap;
}
.title {
  width: 398px; margin: 0; display: flex; justify-content: center; gap: 11px; padding-left: 1px; color: #fff;
  font-size: 10.5px; font-weight: bold; letter-spacing: -0.4px; white-space: nowrap; text-shadow: 0 1px 1px #444;
}
.search {
  width: 160px; height: 18px; padding: 2px 3px; background: #f6f6f6; border: 1px solid #bbb; color: #777;
  font-style: italic; letter-spacing: -0.4px; white-space: nowrap;
}
.signin { width: 74px; padding-left: 2px; color: #f0f0f0; }

.menubar { height: 18px; flex: none; display: flex; align-items: flex-end; padding-left: 45px; background: #404040; }
.tab { height: 18px; line-height: 18px; text-align: center; color: #e9e6dc; white-space: nowrap; flex: none; }
.tab.active { height: 15px; line-height: 13px; background: linear-gradient(#fff, #f2f2f4); color: #35366a; }
.minimize { width: 24px; height: 10px; margin: 0 0 3px 21px; }
.appbtn {
  position: absolute; left: 5px; top: 0; width: 36px; height: 35px; padding: 0; border: 1px solid #444; border-top: 0;
  background: linear-gradient(#b5b5b5, #8a8a8a);
}
.appbtn svg { display: block; width: 34px; height: 34px; }

.ribbon { height: 83px; flex: none; display: flex; padding-left: 6px; background: #6c6a6b; }
.panel { display: flex; flex-direction: column; flex: none; height: 83px; background: #f9f9fb; border-right: 1px solid #c4c4c8; }
.panel > footer {
  height: 16px; flex: none; display: flex; justify-content: center; align-items: center; gap: 7px; padding-bottom: 1px;
  background: #e9e9ec; border-top: 1px solid #d4d4d8; border-bottom: 1px solid #fff; letter-spacing: -0.45px;
}
.p-draw { width: 189px; } .p-modify { width: 219px; } .p-layers { width: 191px; } .p-anno { width: 112px; }
.p-block { width: 137px; } .p-props { width: 183px; } .p-groups { width: 61px; } .p-utils { width: 83px; } .p-clip { width: 70px; }
.filler { flex: 1; background: linear-gradient(90deg, #8f8e90, #b5b4b7); }
.body { flex: 1; display: flex; padding-top: 4px; }
.body.col { flex-direction: column; padding-left: 1px; }
.big { display: flex; flex-direction: column; align-items: center; line-height: 14px; flex: none; white-space: nowrap; }
.big svg { width: 30px; height: 30px; flex: none; }
.big .dn { margin-top: 1px; }
.b36 { width: 36px; } .b38 { width: 38px; } .b40 { width: 41px; } .b42 { width: 42px; } .b44 { width: 44px; } .b58 { width: 58px; }
.stack { display: flex; flex-direction: column; gap: 2px; }
.mini {
  width: 21px; height: 18.5px; display: flex; align-items: center; justify-content: center;
  background: linear-gradient(#fafafb, #e9e9ed); border: 1px solid #d0d0d5;
}
.mini.wide { width: 31px; justify-content: space-between; padding: 0 3px 0 2px; }
.mini.on { background: #8fc0e8; border-color: #3b7ab0; }
.p-modify .body { padding-left: 6px; }
.cells { display: grid; grid-template-rows: 20px 20.5px 20.5px; }
.c3 { grid-template-columns: 63px 61px 62px; }
.c1 { grid-template-columns: auto; }
.cell { display: flex; align-items: center; gap: 3px; white-space: nowrap; }
.cell .gap { margin-left: 5px; }
.p-block .cell .gap { margin-left: 4px; }
.p-anno .cells, .p-block .cells { padding-left: 3px; }
.p-groups .mini { width: 22px; }

.lrow { display: flex; gap: 4px; height: 20px; }
.lgroup { display: flex; align-items: center; gap: 5px; padding: 0 1.5px; height: 19px; background: linear-gradient(#fafafb, #ebebee); border: 1px solid #d0d0d5; }
.combo {
  display: flex; align-items: center; width: 186px; height: 18px; margin-bottom: 2px; padding: 0 4px 0 2px;
  background: linear-gradient(#ececef, #f6f6f8); border: 1px solid #cfcfd4; white-space: nowrap; letter-spacing: -0.38px;
}
.tight { gap: 2px; }
.tight .ic { width: 15px; height: 13px; }
.swatch { width: 12px; height: 12px; background: #0000fa; border: 1px solid #223; margin-left: 2px; }
.swatch.lg { width: 14px; height: 14px; margin: 0 1px 0 0; }
.cn { padding-left: 2px; }
.prow { display: flex; gap: 3px; height: 20.3px; padding-left: 2px; align-items: center; }
.prow .combo { width: 160px; margin: 0; padding-left: 1px; letter-spacing: -0.55px; }
.prow .combo hr { margin: 0 1px 0 1px; border: 0; height: 1px; background: #111; }
.l57 { width: 57px; }
.prow .combo hr.l52 { width: 52px; margin-left: 6px; }
.mid { display: flex; justify-content: center; align-items: center; gap: 7px; padding-left: 10px; }
.launch { width: 6px; height: 6px; margin-right: 4px; }

.canvas { position: relative; height: 501px; flex: none; margin: 6px 0 0 6px; background: #fdfcfe; }
.drawing { display: block; width: 1270px; height: 501px; }
.cad text { font: 9.4px "Liberation Sans", Arial, sans-serif; fill: #111; stroke: #111; stroke-width: 0.2px; letter-spacing: 0; }
.green text { fill: #18a82a; stroke: #18a82a; }
.green text.heading { font-size: 15.5px; stroke-width: 0; }
.dim { font: 8px "Liberation Sans", sans-serif; fill: #c9c934; }
.cube text { font-family: "Liberation Sans", sans-serif; letter-spacing: 0; }
.cube .top { font-size: 9.5px; font-weight: bold; fill: #85858c; }
.cube .face { font-size: 15px; font-weight: bold; fill: #f4f4f6; stroke: #b4b4b9; stroke-width: 0.8px; }
.cube .wcs { font-size: 10px; fill: #ccccd2; }
.brand { font: bold 35.500px Lato, "Open Sans", sans-serif; fill: #060606; letter-spacing: 0; }
.site { font: 20px Lato, "Open Sans", sans-serif; fill: #8b5a31; }
.viewlabel { position: absolute; left: 4px; top: 4px; color: #222; letter-spacing: 0.15px; }
.prompt { position: absolute; left: 785px; top: 245px; display: flex; gap: 3px; align-items: flex-start; white-space: nowrap; }
.tip { width: 148px; height: 18px; line-height: 14px; background: #918f94; border: 1px solid #222; color: #151515; letter-spacing: -0.5px; }
.value { width: 55px; height: 15px; border: 1px solid #333; background: #fdfdfe; }
.value em { display: block; width: 47px; height: 11px; margin: 1px; line-height: 11px; font-style: normal; background: #173a80; color: #fff; letter-spacing: -0.55px; }

.layouts { height: 15px; flex: none; margin-left: 6px; background: #d4d0cc; border-top: 1px solid #777; }
.layouts svg { display: block; width: 204px; height: 14px; }
.lt text { font: 10px "DejaVu Sans Condensed", "DejaVu Sans", sans-serif; fill: #26262a; }

.command { height: 47px; flex: none; display: flex; margin: 4px 0 0 5px; }
.side { width: 20px; background: #4a4a4c; }
.side svg { width: 18px; height: 47px; display: block; }
.log { flex: 1; background: #fdfdfe; color: #1b1b24; font: 10.36px/12.5px "DejaVu Sans Mono", monospace; letter-spacing: 0; }
.hist { height: 29px; margin: 0; padding: 1px 2px; font: inherit; background: #c6c4c7; border-bottom: 1px solid #999; }
.line { display: flex; align-items: center; height: 18px; padding-left: 5px; gap: 7px; }
.line svg { width: 22px; height: 12px; }

.status { height: 22px; flex: none; display: flex; align-items: stretch; margin: 1px 0 0 5px; border-top: 1px solid #111; background: linear-gradient(#8f8e91, #7b7a7d); }
.coords { width: 211px; padding: 3px 0 0 11px; color: #151515; font: 10.5px "Liberation Sans", sans-serif; letter-spacing: -0.5px; white-space: nowrap; }
.tog { width: 19.6px; flex: none; display: flex; align-items: center; justify-content: center; height: 19px; background: linear-gradient(#bdbdc0, #a4a4a7); border-right: 1px solid #777; }
.tog.on { background: linear-gradient(#c5e7f8, #8dc3e2); }
.space { width: 456px; }
.model { width: 39px; color: #222; font: 10.5px "Liberation Sans", sans-serif; }
.sep { margin-right: 11px; }
.sep2 { margin-right: 4px; }
.scale { width: 46px; gap: 3px; }
.tray { width: 41px; height: 17px; margin: 1px 4px 0 0; display: flex; align-items: center; justify-content: space-around; background: #8f8f92; border: 1px solid #555; }
.last { flex: 1; justify-content: flex-start; gap: 3px; padding-left: 2px; border: 0; background: #a9a9ac; }
</style>
